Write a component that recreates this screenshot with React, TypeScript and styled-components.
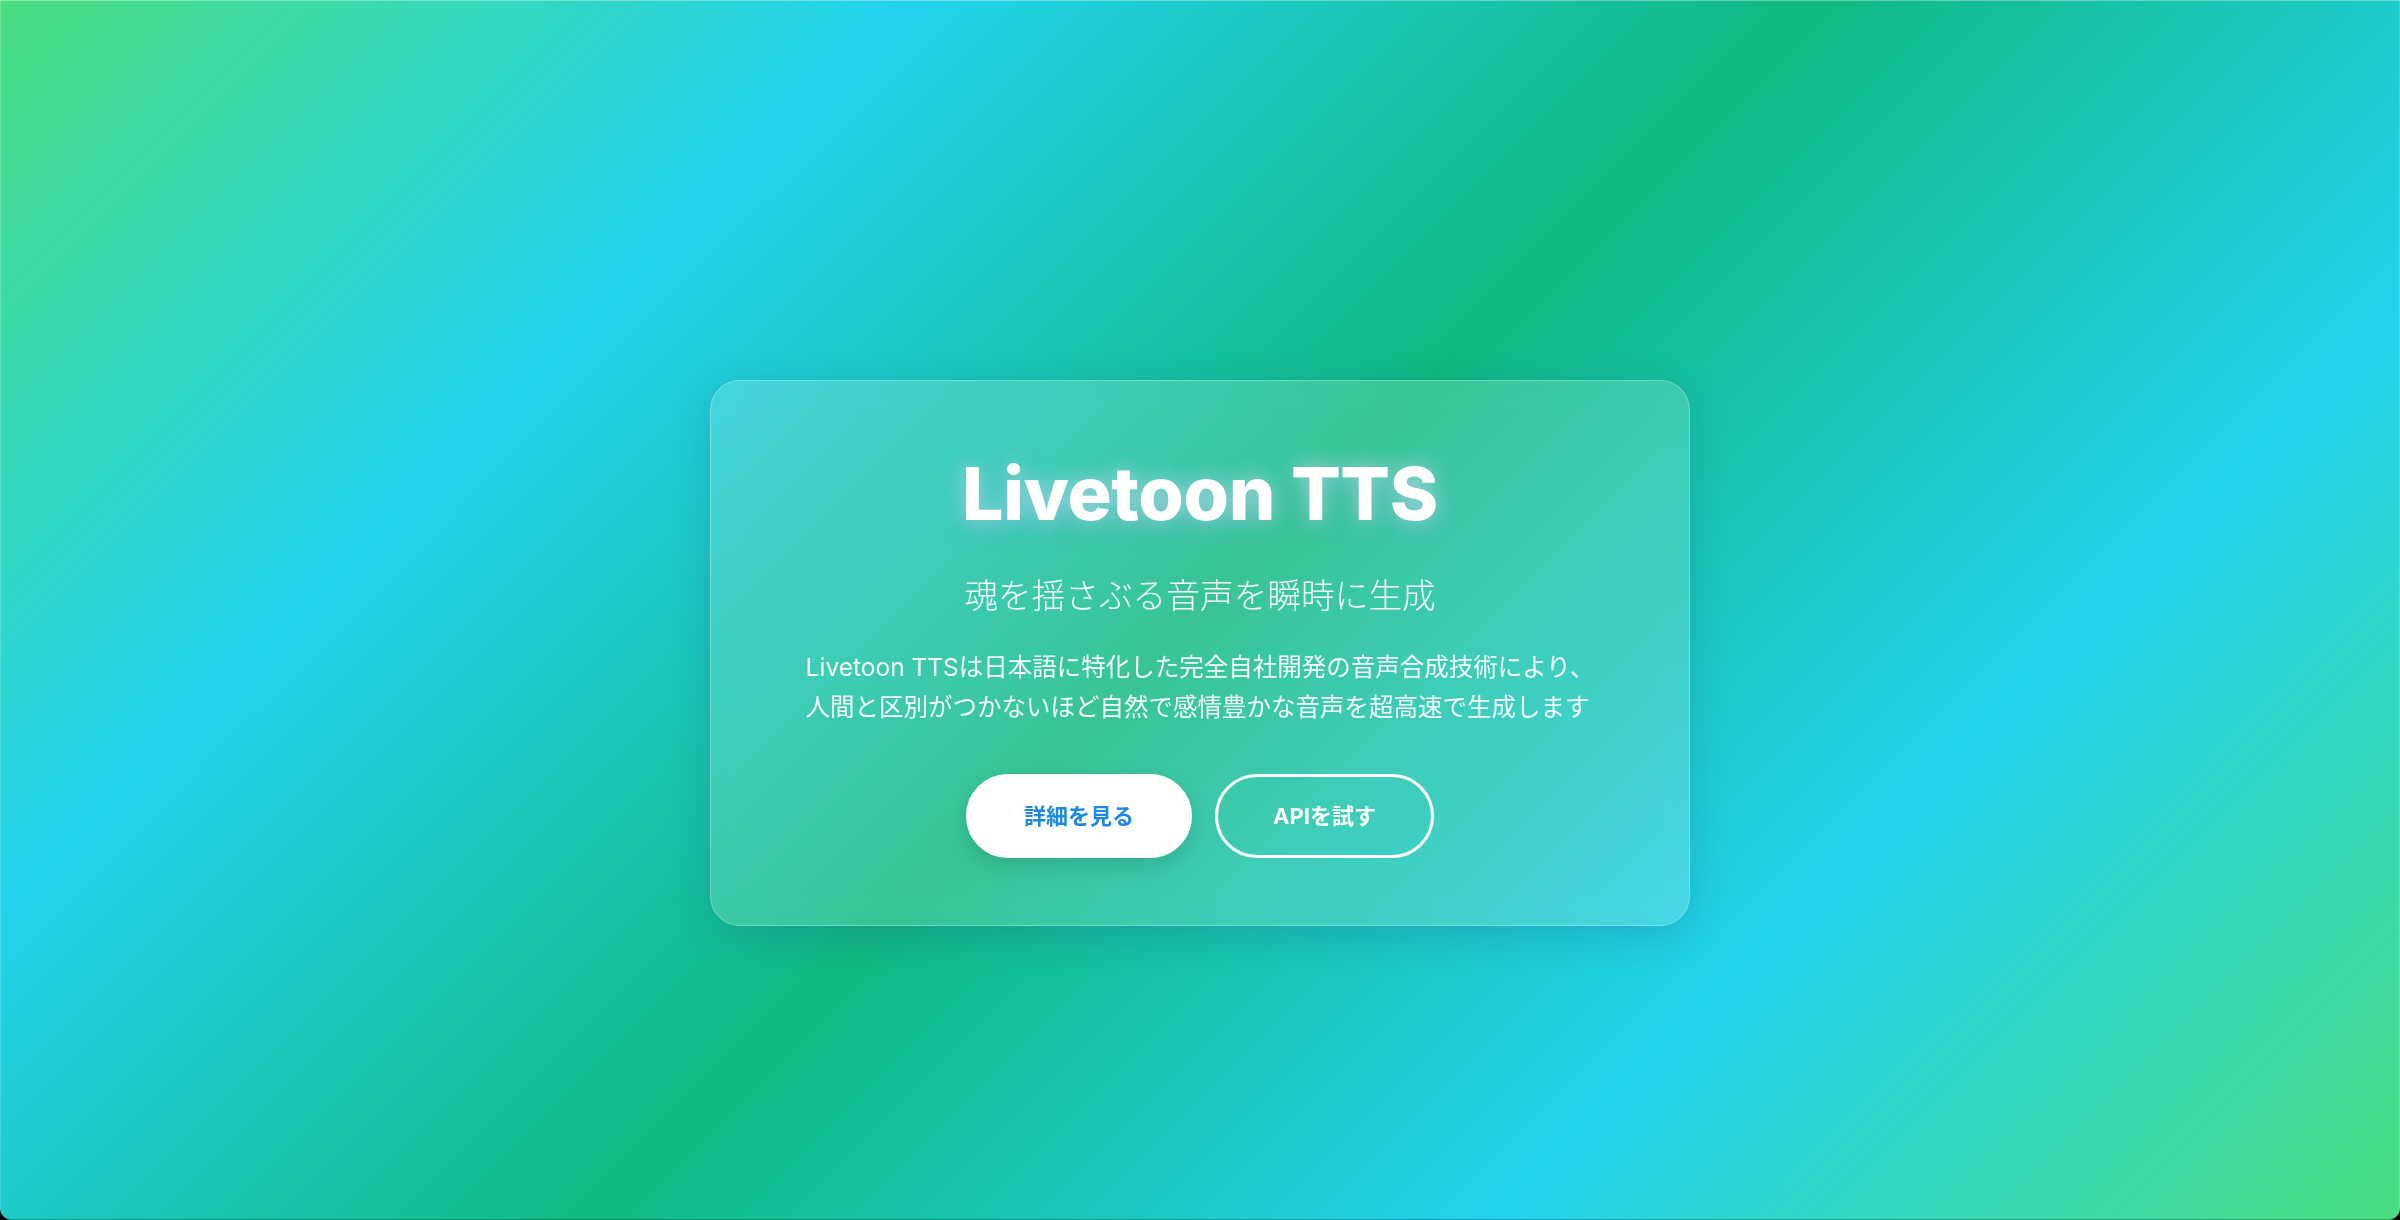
import React from "react";
import styled, { createGlobalStyle } from "styled-components";

const GlobalStyle = createGlobalStyle`
  * { box-sizing: border-box; }
  html, body { margin: 0; padding: 0; background: #000; }
  body {
    font-family: "Inter", "Noto Sans CJK JP", "Noto Sans", sans-serif;
    -webkit-font-smoothing: antialiased;
  }
`;

const Screen = styled.div`
  width: 100%;
  height: 1220px;
  border-radius: 0 0 12px 12px;
  overflow: hidden;
  background: linear-gradient(
    135deg,
    #4ade80 0%,
    #22d3ee 25%,
    #10b981 50%,
    #22d3ee 75%,
    #4ade80 100%
  );
  box-shadow: inset 0 1px 0 rgba(255, 255, 255, 0.35),
    inset 1px 0 0 rgba(255, 255, 255, 0.2),
    inset -1px 0 0 rgba(255, 255, 255, 0.2),
    inset 0 -1px 0 rgba(0, 0, 0, 0.25);
  display: flex;
  align-items: center;
  justify-content: center;
  padding-top: 86px;
`;

const Card = styled.section`
  width: 980px;
  padding: 69px 60px 67px;
  border-radius: 30px;
  background: rgba(255, 255, 255, 0.17);
  border: 1px solid rgba(255, 255, 255, 0.28);
  backdrop-filter: blur(12px);
  -webkit-backdrop-filter: blur(12px);
  box-shadow: 0 10px 40px rgba(31, 38, 135, 0.18);
  display: flex;
  flex-direction: column;
  align-items: center;
  text-align: center;
  color: #fff;
`;

const Title = styled.h1`
  margin: 0 0 32px;
  font-family: "Inter", sans-serif;
  font-weight: 800;
  font-size: 73.5px;
  line-height: 1.2;
  letter-spacing: -0.3px;
  color: #fff;
  text-shadow: 0 0 22px rgba(255, 255, 255, 0.55),
    0 4px 26px rgba(102, 126, 234, 0.45);
`;

const Subtitle = styled.p`
  margin: 0 0 30px;
  font-family: "Noto Sans CJK JP", sans-serif;
  font-weight: 300;
  font-size: 33.7px;
  line-height: 1.4;
  color: rgba(255, 255, 255, 0.95);
`;

const Description = styled.p`
  margin: 0 0 47px;
  font-family: "Inter", "Noto Sans CJK JP", sans-serif;
  font-weight: 400;
  font-size: 24.5px;
  line-height: 40px;
  text-align: left;
  color: rgba(255, 255, 255, 0.95);
`;

const ButtonRow = styled.div`
  display: flex;
  gap: 23px;
  justify-content: center;
`;

const Button = styled.button<{ $variant: "solid" | "outline" }>`
  font-family: "Inter", "Noto Sans CJK JP", sans-serif;
  font-weight: 700;
  font-size: 22px;
  line-height: 26px;
  padding: 26px 55px;
  border-radius: 999px;
  border: 3px solid #fff;
  cursor: pointer;
  background: ${(p) => (p.$variant === "solid" ? "#fff" : "transparent")};
  color: ${(p) => (p.$variant === "solid" ? "#1e88e5" : "#fff")};
  box-shadow: ${(p) =>
    p.$variant === "solid" ? "0 8px 24px rgba(0, 0, 0, 0.14)" : "none"};
`;

export default function App() {
  return (
    <>
      <GlobalStyle />
      <Screen>
        <Card>
          <Title>Livetoon TTS</Title>
          <Subtitle>魂を揺さぶる音声を瞬時に生成</Subtitle>
          <Description>
            Livetoon TTSは日本語に特化した完全自社開発の音声合成技術により、
            <br />
            人間と区別がつかないほど自然で感情豊かな音声を超高速で生成します
          </Description>
          <ButtonRow>
            <Button $variant="solid">詳細を見る</Button>
            <Button $variant="outline">APIを試す</Button>
          </ButtonRow>
        </Card>
      </Screen>
    </>
  );
}
